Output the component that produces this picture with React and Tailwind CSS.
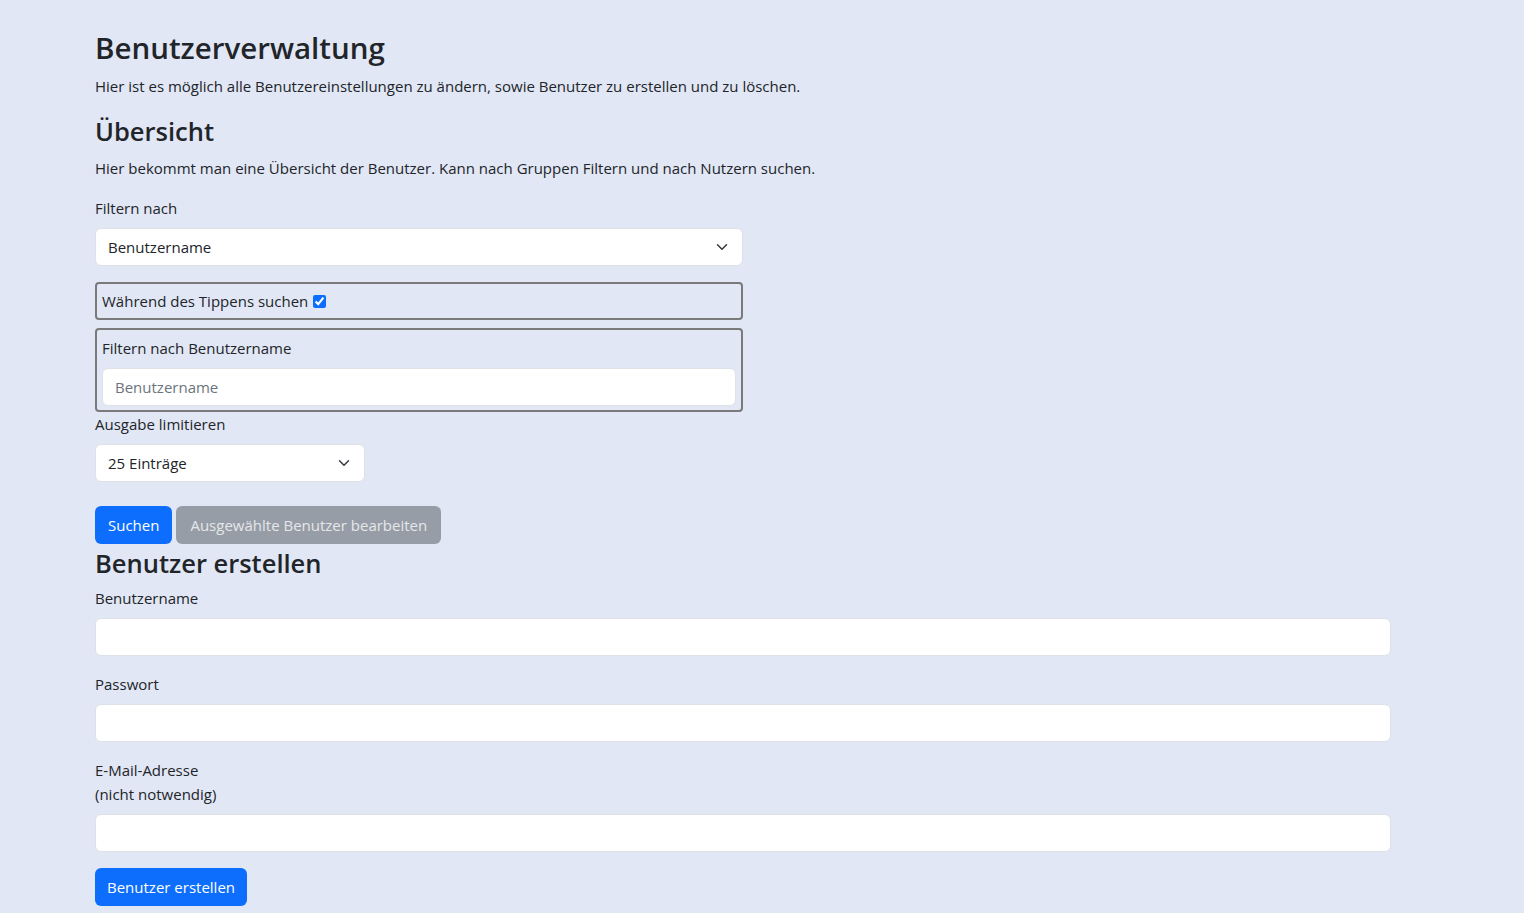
import { useState } from 'react'

const FONT = { fontFamily: '"Open Sans", "Noto Sans", sans-serif' }

function Chevron() {
  return (
    <svg className="w-4 h-3 shrink-0" viewBox="0 0 16 16" fill="none">
      <path d="m2 5 6 6 6-6" stroke="#343a40" strokeWidth="2" strokeLinecap="round" strokeLinejoin="round" />
    </svg>
  )
}

function FakeSelect({ value, className = '' }) {
  return (
    <div className={`h-[38px] bg-white border border-[#dee2e6] rounded-md flex items-center justify-between pl-3 pr-3 ${className}`}>
      <span>{value}</span>
      <Chevron />
    </div>
  )
}

function TextInput({ placeholder = '' }) {
  return (
    <input
      placeholder={placeholder}
      className="block w-full h-[38px] bg-white border border-[#dee2e6] rounded-md px-3 outline-none placeholder:text-[#6c757d]"
    />
  )
}

export default function App() {
  const [live, setLive] = useState(true)

  return (
    <div className="min-h-screen bg-[#e1e7f5] text-[#212529] text-[15px] leading-6" style={FONT}>
      <div className="pl-[95px] pt-[29px] pb-2 w-[1391px]">
        <h1 className="text-[29.5px] leading-[38px] font-semibold mb-[7px]">Benutzerverwaltung</h1>
        <p className="mb-4">Hier ist es möglich alle Benutzereinstellungen zu ändern, sowie Benutzer zu erstellen und zu löschen.</p>

        <h3 className="text-[25.5px] leading-[34px] font-semibold mb-2">Übersicht</h3>
        <p className="mb-4">Hier bekommt man eine Übersicht der Benutzer. Kann nach Gruppen Filtern und nach Nutzern suchen.</p>

        <div className="w-[648px]">
          <label className="block mb-2">Filtern nach</label>
          <FakeSelect value="Benutzername" />

          <fieldset className="mt-4 h-[38px] border-2 border-[#7a7a7a] rounded-[4px] px-[5px] flex items-center">
            <label className="flex items-center gap-[5px]">
              Während des Tippens suchen
              <input
                type="checkbox"
                checked={live}
                onChange={() => setLive(!live)}
                className="w-[13px] h-[13px] accent-[#0d6efd]"
              />
            </label>
          </fieldset>

          <fieldset className="mt-2 border-2 border-[#7a7a7a] rounded-[4px] px-[5px] pt-[6px] pb-[4px]">
            <label className="block mb-2">Filtern nach Benutzername</label>
            <TextInput placeholder="Benutzername" />
          </fieldset>

          <label className="block mt-0">Ausgabe limitieren</label>
          <FakeSelect value="25 Einträge" className="mt-2 w-[270px]" />
        </div>

        <div className="flex gap-1 mt-6">
          <button className="h-[38px] px-[13px] rounded-md bg-[#0d6efd] text-white">Suchen</button>
          <button className="h-[38px] px-[14px] rounded-md bg-[#979da6] text-[#e4e7ea]">Ausgewählte Benutzer bearbeiten</button>
        </div>

        <h3 className="text-[25.5px] leading-[34px] font-semibold mt-0.5 mb-1.5">Benutzer erstellen</h3>

        <label className="block mb-2">Benutzername</label>
        <TextInput />
        <label className="block mt-4 mb-2">Passwort</label>
        <TextInput />
        <label className="block mt-4 mb-2">E-Mail-Adresse<br />(nicht notwendig)</label>
        <TextInput />

        <button className="mt-4 h-[38px] px-3 rounded-md bg-[#0d6efd] text-white">Benutzer erstellen</button>
      </div>
    </div>
  )
}
